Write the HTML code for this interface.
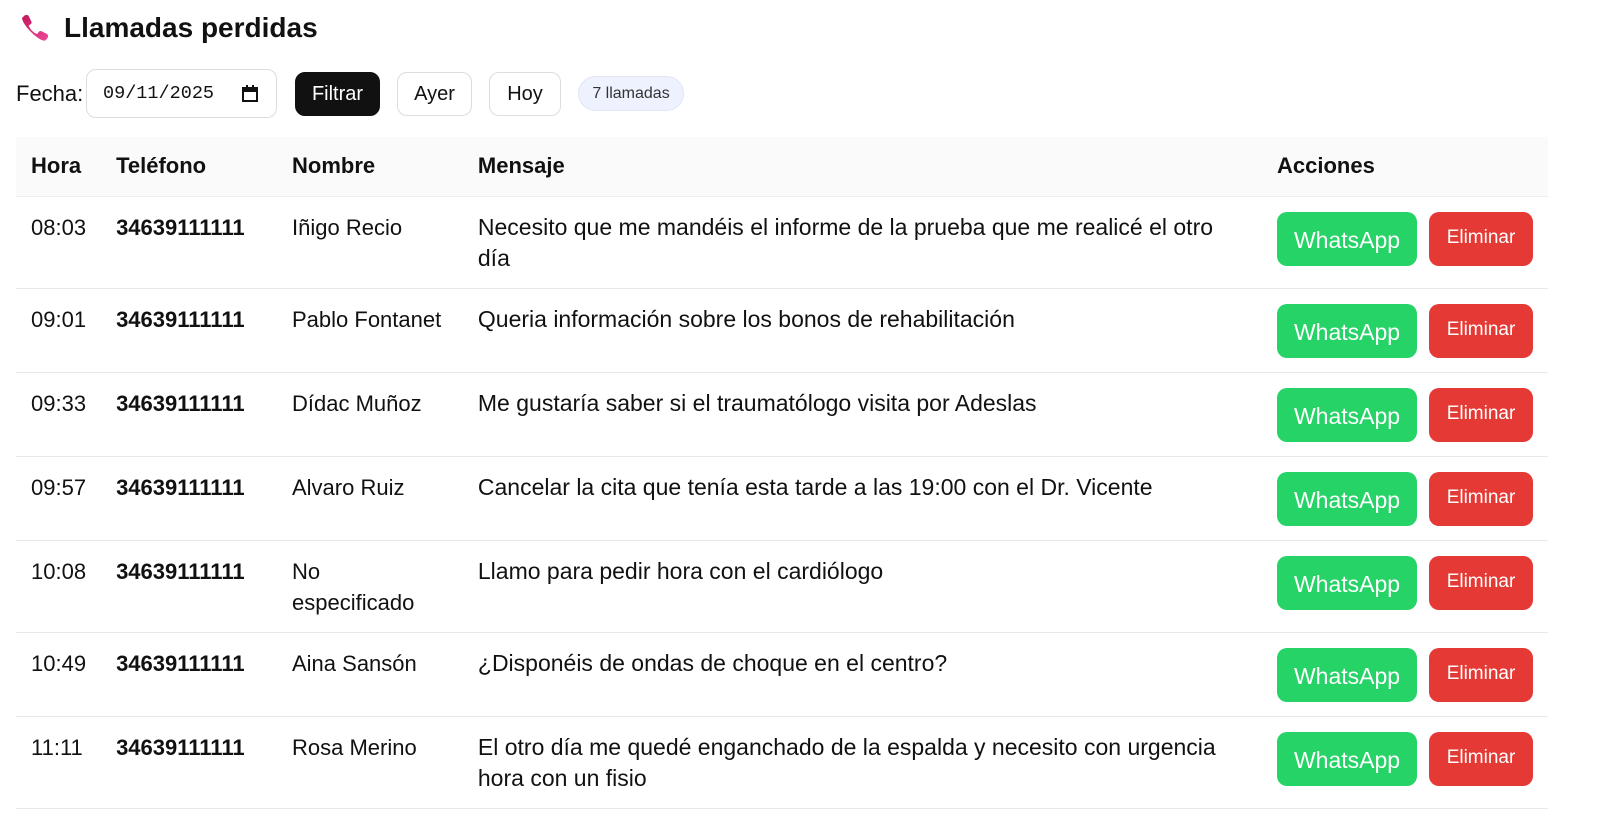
<!DOCTYPE html>
<html><head><meta charset="utf-8"><style>
*{box-sizing:border-box;margin:0;padding:0}
body{width:1600px;height:835px;background:#fff;font-family:"Liberation Sans","DejaVu Sans",sans-serif;color:#111;position:relative;overflow:hidden}
.t{position:absolute;left:64px;top:10px;font-size:28px;font-weight:bold;line-height:36px}
.ic{position:absolute;left:20px;top:12px}
.f{position:absolute;top:69px;height:49px;display:flex;align-items:center}
.lbl{left:16px;font-size:22px}
.date{left:86px;width:191px;border:1px solid #ddd;border-radius:10px;font-family:"Liberation Mono",monospace;font-size:18.5px;padding-left:16px}
.btn{top:72px;height:44px;border-radius:10px;border:1px solid #ddd;font-size:20px;justify-content:center}
.badge{position:absolute;left:578px;top:76px;width:106px;height:35px;border-radius:18px;background:#eef2ff;border:1px solid #e0e6f8;font-size:16px;display:flex;align-items:center;justify-content:center;color:#333}
table{position:absolute;left:16px;top:137px;width:1532px;border-collapse:collapse;font-size:22px}
th{background:#fafafa;text-align:left;font-weight:600;height:59px;padding:0 15px;border-bottom:1px solid #eee}
td{vertical-align:top;padding:15px 15px 14px;line-height:31px;border-bottom:1px solid #e8e8e8}
td.m{font-size:23px;padding-right:31px}
td b{font-weight:bold}
.a{white-space:nowrap;padding-top:15px}
.w,.e{display:inline-block;height:54px;border-radius:10px;color:#fff;text-align:center;vertical-align:top}
.w{width:140px;background:#25d366;line-height:56px;font-size:23px}
.e{width:104px;background:#e53935;margin-left:12px;line-height:52px;font-size:19px}
</style></head><body>
<svg class="ic" width="32" height="32" viewBox="0 0 24 24"><defs><linearGradient id="g" x1="0" y1="0" x2="1" y2="1"><stop offset="0" stop-color="#c2185b"/><stop offset="1" stop-color="#ec4899"/></linearGradient></defs><path fill="url(#g)" d="M3 3c1-1 3-1 3.5 0l2 4c.5 1 0 2-1 2.5L6.5 10c1 3 3.5 5.5 6.5 6.5l.8-1.2c.6-.9 1.6-1.3 2.5-.8l4 2c1 .5 1 2.5 0 3.5l-1.5 1.5C14 22 2 10 1.5 4.5z"/></svg>
<div class="t">Llamadas perdidas</div>
<div class="f lbl">Fecha:</div>
<div class="f date">09/11/2025<svg style="margin-left:auto;margin-right:17px" width="18" height="18" viewBox="0 0 18 18"><rect x="2" y="3" width="14" height="13" fill="none" stroke="#111" stroke-width="2"/><rect x="2" y="3" width="14" height="4" fill="#111"/><rect x="5" y="0" width="2" height="4" fill="#111"/><rect x="11" y="0" width="2" height="4" fill="#111"/></svg></div>
<div class="f btn" style="left:295px;width:85px;background:#111;color:#fff;border-color:#111">Filtrar</div>
<div class="f btn" style="left:397px;width:75px">Ayer</div>
<div class="f btn" style="left:489px;width:72px">Hoy</div>
<div class="badge">7 llamadas</div>
<table>
<colgroup><col style="width:83px"><col style="width:176px"><col style="width:186px"><col style="width:801px"><col></colgroup>
<tr><th>Hora</th><th>Teléfono</th><th>Nombre</th><th>Mensaje</th><th>Acciones</th></tr>
<tr><td>08:03</td><td><b>34639111111</b></td><td>Iñigo Recio</td><td class="m">Necesito que me mandéis el informe de la prueba que me realicé el otro día</td><td class="a"><span class="w">WhatsApp</span><span class="e">Eliminar</span></td></tr>
<tr><td>09:01</td><td><b>34639111111</b></td><td>Pablo Fontanet</td><td class="m">Queria información sobre los bonos de rehabilitación</td><td class="a"><span class="w">WhatsApp</span><span class="e">Eliminar</span></td></tr>
<tr><td>09:33</td><td><b>34639111111</b></td><td>Dídac Muñoz</td><td class="m">Me gustaría saber si el traumatólogo visita por Adeslas</td><td class="a"><span class="w">WhatsApp</span><span class="e">Eliminar</span></td></tr>
<tr><td>09:57</td><td><b>34639111111</b></td><td>Alvaro Ruiz</td><td class="m">Cancelar la cita que tenía esta tarde a las 19:00 con el Dr. Vicente</td><td class="a"><span class="w">WhatsApp</span><span class="e">Eliminar</span></td></tr>
<tr><td>10:08</td><td><b>34639111111</b></td><td>No especificado</td><td class="m">Llamo para pedir hora con el cardiólogo</td><td class="a"><span class="w">WhatsApp</span><span class="e">Eliminar</span></td></tr>
<tr><td>10:49</td><td><b>34639111111</b></td><td>Aina Sansón</td><td class="m">¿Disponéis de ondas de choque en el centro?</td><td class="a"><span class="w">WhatsApp</span><span class="e">Eliminar</span></td></tr>
<tr><td>11:11</td><td><b>34639111111</b></td><td>Rosa Merino</td><td class="m">El otro día me quedé enganchado de la espalda y necesito con urgencia hora con un fisio</td><td class="a"><span class="w">WhatsApp</span><span class="e">Eliminar</span></td></tr>
</table>
</body></html>
